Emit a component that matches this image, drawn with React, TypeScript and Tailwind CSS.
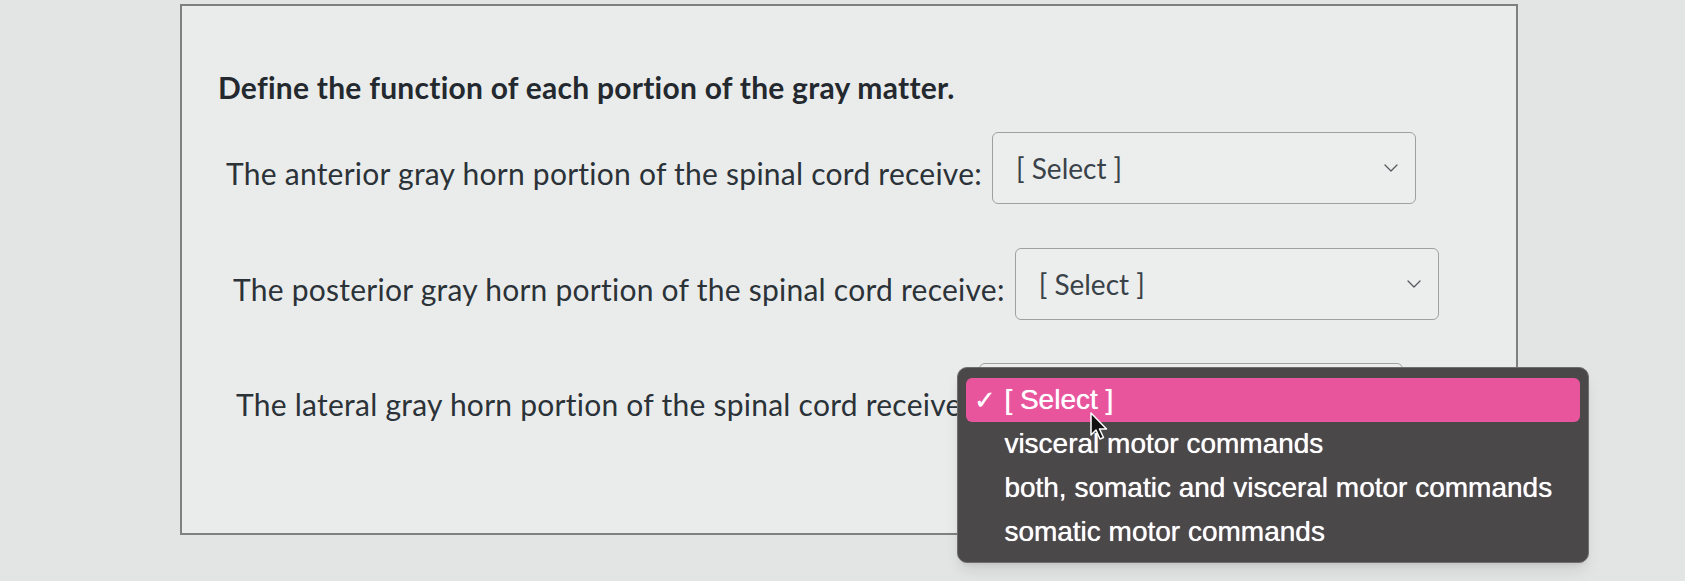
import React from 'react';
import { ChevronDown } from 'lucide-react';

const options = [
  'visceral motor commands',
  'both, somatic and visceral motor commands',
  'somatic motor commands',
];

const SelectBox = ({ children }: { children?: React.ReactNode }) => (
  <div className="relative w-[424px] h-[72px] shrink-0 rounded-md border border-[#9ea1a1] bg-[#eceeed] flex items-center justify-between pl-[23px] pr-[12px]">
    <span className="text-[28px] text-[#3a4249]">[ Select ]</span>
    <ChevronDown size={24} strokeWidth={1.3} className="text-[#555a5e]" />
    {children}
  </div>
);

const Cursor = () => (
  <svg width="20" height="30" viewBox="0 0 20 30" className="absolute left-[124px] top-[34px]">
    <path d="M1 1 L1 23 L6 18 L10 27 L13.5 25.5 L9.5 17 L16.5 17 Z" fill="#111" stroke="#fff" strokeWidth="1.5" strokeLinejoin="round" />
  </svg>
);

export default function App() {
  return (
    <div className="w-[1685px] h-[581px] bg-[#e3e5e4] overflow-hidden pt-[4px] font-['Lato','Noto_Sans',sans-serif] text-[#2b3238]">
      <div className="ml-[180px] w-[1338px] h-[531px] border-2 border-[#7e8181] bg-[#eaeceb] pt-[63px]">
        {/* question */}
        <p className="pl-[36px] text-[30px] leading-[36px] tracking-[0.25px] font-bold text-[#23292e]">
          Define the function of each portion of the gray matter.
        </p>

        <div className="mt-[27px] pl-[44px] flex items-center gap-[10px]">
          <span className="pt-[11px] text-[30px] tracking-[0.25px] whitespace-nowrap">The anterior gray horn portion of the spinal cord receive:</span>
          <SelectBox />
        </div>

        <div className="mt-[44px] pl-[51px] flex items-center gap-[10px]">
          <span className="pt-[11px] text-[30px] tracking-[0.25px] whitespace-nowrap">The posterior gray horn portion of the spinal cord receive:</span>
          <SelectBox />
        </div>

        <div className="mt-[43px] pl-[54px] flex items-center gap-[10px]">
          <span className="pt-[11px] text-[30px] tracking-[0.25px] whitespace-nowrap">The lateral gray horn portion of the spinal cord receive:</span>
          <SelectBox>
            {/* open dropdown */}
            <div className="absolute -left-[23px] top-[3px] w-[632px] rounded-[10px] border border-[#6f6d6d] bg-[#4a4848] px-[8px] pt-[10px] pb-[8px] shadow-lg font-['Liberation_Sans',Arial,sans-serif] text-[28px] text-white [text-shadow:0_0_0.7px_#fff] z-10">
              <div className="relative h-[44px] rounded-[6px] bg-[#e8559d] flex items-center">
                <span className="w-[38px] pl-[8px] text-[26px] leading-none">✓</span>
                <span>[ Select ]</span>
                <Cursor />
              </div>
              {options.map(o => (
                <div key={o} className="h-[44px] flex items-center pl-[38px] whitespace-nowrap">{o}</div>
              ))}
            </div>
          </SelectBox>
        </div>
      </div>
    </div>
  );
}
